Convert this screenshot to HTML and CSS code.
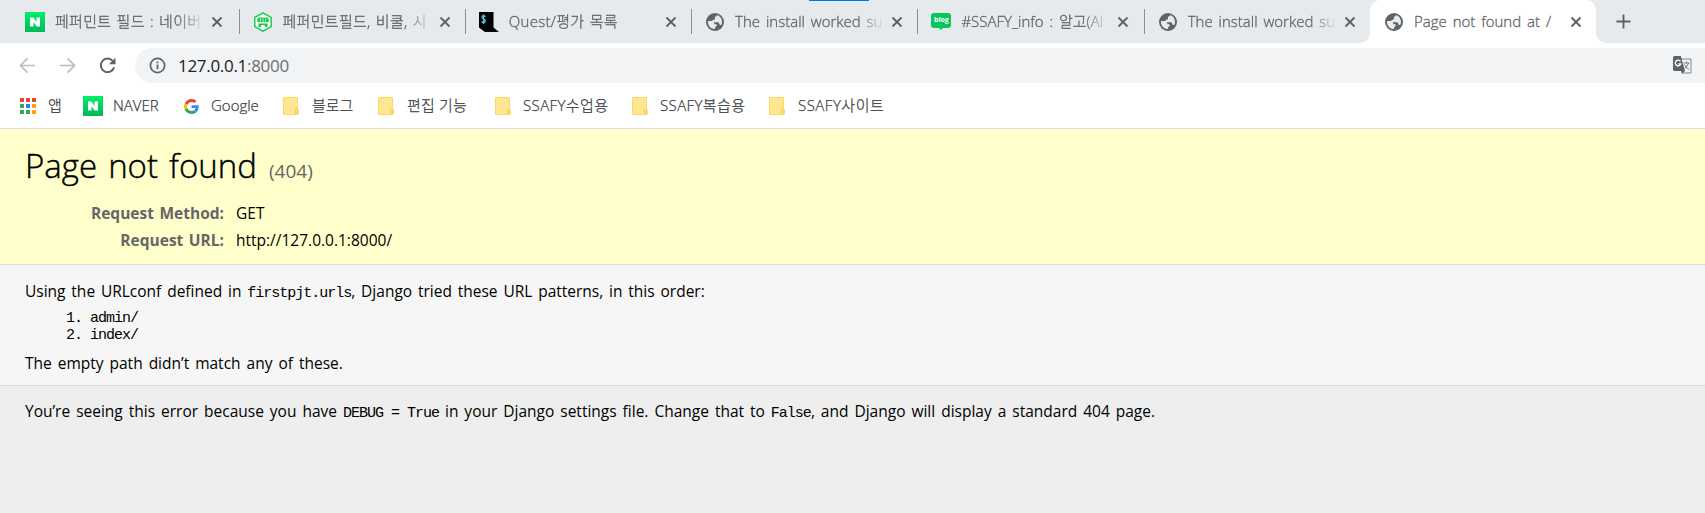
FILE: index.html
```html
<!DOCTYPE html>
<html lang="ko">
<head>
<meta charset="utf-8">
<title>Page not found at /</title>
<link rel="stylesheet" href="styles.css">
</head>
<body>
<svg class="defs" width="0" height="0">
  <symbol id="globe" viewBox="2 2 20 20"><circle cx="12" cy="12" r="10" fill="#5f6368"/><path d="M4.200 11h4.600c1.700 0 2.400.9 2.400 2.200v1.200h1.700c.9 0 1.100.5 1.100 1.100 0 1.200-1.700 1.500-1.900 2.500v1.900C7.800 20.200 3.700 16.400 4.200 11zM14.300 4.300c3.300 1 5.400 4 5.500 7.500 0 1.300-.3 2.400-.9 3.400-.8.3-1.700 0-2-.6-.2-1.600-1.100-2.200-2.300-2.200h-2.200c-1 0-1.300-.8-2.100-.8-.8-.1-1.200-.5-1.200-1s.5-1 1.200-1c1.200 0 1.600-.5 1.600-1.300V6.800c.2-.8 1-1.200 1.900-1.200z" fill="#e7eaed"/></symbol>
  <symbol id="close" viewBox="0 0 12 12"><path d="M1.500 1.500l9 9M10.500 1.500l-9 9" stroke="#5f6368" stroke-width="1.900" fill="none"/></symbol>
  <symbol id="naver" viewBox="0 0 20 20"><linearGradient id="ng" x2="0" y2="1"><stop stop-color="#00ef6b"/><stop offset="1" stop-color="#00b857"/></linearGradient><path d="M0 0h20v20H0z" fill="url(#ng)"/><path d="M5 5.500h3.500l3 4.200V5.500H15v9h-3.400l-3.100-4.300v4.300H5z" fill="#fff"/></symbol>
  <symbol id="folder" viewBox="0 0 16 18"><path d="M.5.500h14v12l1 1.500v2.500q0 1-1.500 1H.5z" fill="#ffe690" stroke="#fbd968"/><path d="M12.500 17v-4q0-1.200 1.200-1.200t1.300 1.200v3.200q0 1.300-2.500 1.300" fill="#ffe07a" stroke="#f6cf52"/></symbol>
</svg>

<header class="browser">
  <div class="tabs">
    <i class="progress"></i>
    <div class="tab first"><svg class="fav"><use href="#naver"/></svg><span class="label kr">페퍼민트 필드 : 네이버</span><svg class="close"><use href="#close"/></svg></div>
    <div class="tab"><svg class="fav" viewBox="0 0 20 20"><path d="M10 .8l8.200 4.700v9L10 19.200 1.800 14.500v-9z" fill="#f4fff7" stroke="#14c94b" stroke-width="1.400"/><path d="M5 5.500h10l1 4q-1.500 1.500-3 0-1.500 1.500-3 0-1.500 1.500-3 0-1.500 1.500-3 0zM5.500 11.500h9V15h-2.200q-.3-2-1.300-2h-2q-1 0-1.300 2H5.500z" fill="#14c94b"/><path d="M7.500 6v3.500M10 6v3.500M12.500 6v3.500" stroke="#f4fff7" stroke-width=".7"/></svg><span class="label kr">페퍼민트필드, 비쿨, 시</span><svg class="close"><use href="#close"/></svg></div>
    <div class="tab"><svg class="fav" viewBox="0 0 20 20"><path d="M0 0h14.500v15.500L20 20H6l-6-4.500z" fill="#000"/><path d="M6.300 5Q6 3.700 4.500 3.700T3 5.200q0 1 1.600 1.700T6.300 9q0 1.700-1.700 1.700T2.700 9.300M4.600 2.500v9.500" fill="none" stroke="#55c8e8" stroke-width="1.200"/></svg><span class="label kr">Quest/평가 목록</span><svg class="close"><use href="#close"/></svg></div>
    <div class="tab"><svg class="fav globe"><use href="#globe"/></svg><span class="label">The install worked suc</span><svg class="close"><use href="#close"/></svg></div>
    <div class="tab"><span class="fav blog">blog</span><span class="label">#SSAFY_info : 알고(Al</span><svg class="close"><use href="#close"/></svg></div>
    <div class="tab"><svg class="fav globe"><use href="#globe"/></svg><span class="label">The install worked suc</span><svg class="close"><use href="#close"/></svg></div>
    <div class="tab active"><svg class="fav globe"><use href="#globe"/></svg><span class="label">Page not found at /</span><svg class="close"><use href="#close"/></svg></div>
    <svg class="plus" viewBox="0 0 16 16"><path d="M8 .5v15M.5 8h15" stroke="#5f6368" stroke-width="2"/></svg>
  </div>

  <div class="toolbar">
    <svg class="nav" viewBox="0 0 18 18"><path d="M17 9H2M9 1.500L1.500 9 9 16.500" fill="none" stroke="#bbbdbf" stroke-width="1.800"/></svg>
    <svg class="nav" viewBox="0 0 18 18"><path d="M1 9h15M9 1.500L16.500 9 9 16.500" fill="none" stroke="#bbbdbf" stroke-width="1.800"/></svg>
    <svg class="nav" viewBox="0 0 18 18"><path d="M14.500 4A7.200 7.200 0 1 0 16 11" fill="none" stroke="#5f6368" stroke-width="2"/><path d="M17.500.8v7h-7z" fill="#5f6368"/></svg>
    <div class="omnibox">
      <svg class="info" viewBox="0 0 18 18"><circle cx="9" cy="9" r="7.500" fill="none" stroke="#5f6368" stroke-width="1.800"/><path d="M9 8v5M9 4.800v1.900" stroke="#5f6368" stroke-width="1.900"/></svg>
      <span class="url">127.0.0.1<span>:8000</span></span>
      <svg class="translate" viewBox="0 0 19 18"><path d="M8 3h10v14H10" fill="#f1f3f4" stroke="#85898d"/><path d="M1.500 0h6.300L12 15H1.500Q0 15 0 13.500v-12Q0 0 1.500 0zM8 15h4l-3 3z" fill="#5f6368"/><path d="M7.500 5.500a2.800 2.800 0 1 0 .3 2.300H5.300" fill="none" stroke="#fff" stroke-width="1.300"/><path d="M10.500 7h6M13.500 5.500V7M15.500 7q-1 3.500-4 5.500M11.700 8.500q1.500 3.500 4.300 5" fill="none" stroke="#777b80"/></svg>
    </div>
  </div>

  <nav class="bookmarks">
    <a class="bm apps"><svg class="grid" viewBox="0 0 16 16"><path d="M0 0h4v4H0zM6 0h4v4H6zM12 0h4v4h-4z" fill="#ea4335"/><path d="M0 6h4v4H0zM0 12h4v4H0zM6 12h4v4H6z" fill="#34a853"/><path d="M6 6h4v4H6z" fill="#1e88f0"/><path d="M12 6h4v4h-4zM12 12h4v4h-4z" fill="#fba60a"/></svg><span>앱</span></a>
    <a class="bm nv"><svg class="icon20"><use href="#naver"/></svg><span>NAVER</span></a>
    <a class="bm gg"><svg class="g" viewBox="0 0 48 48"><path fill="#EA4335" d="M24 9.500c3.540 0 6.710 1.220 9.210 3.600l6.850-6.850C35.900 2.380 30.470 0 24 0 14.620 0 6.510 5.380 2.560 13.220l7.980 6.190C12.430 13.720 17.740 9.500 24 9.500z"/><path fill="#4285F4" d="M46.980 24.550c0-1.570-.15-3.090-.38-4.550H24v9.020h12.940c-.58 2.960-2.260 5.480-4.780 7.180l7.730 6c4.510-4.180 7.090-10.360 7.090-17.650z"/><path fill="#FBBC05" d="M10.530 28.590c-.48-1.450-.76-2.990-.76-4.590s.27-3.140.76-4.590l-7.980-6.190C.92 16.460 0 20.120 0 24s.92 7.540 2.560 10.780l7.970-6.190z"/><path fill="#34A853" d="M24 48c6.480 0 11.930-2.130 15.890-5.810l-7.730-6c-2.150 1.450-4.920 2.300-8.160 2.300-6.260 0-11.570-4.220-13.470-9.910l-7.980 6.190C6.510 42.620 14.620 48 24 48z"/></svg><span>Google</span></a>
    <a class="bm f1"><svg class="folder"><use href="#folder"/></svg><span>블로그</span></a>
    <a class="bm f2"><svg class="folder"><use href="#folder"/></svg><span>편집 기능</span></a>
    <a class="bm f3"><svg class="folder"><use href="#folder"/></svg><span>SSAFY수업용</span></a>
    <a class="bm f4"><svg class="folder"><use href="#folder"/></svg><span>SSAFY복습용</span></a>
    <a class="bm f5"><svg class="folder"><use href="#folder"/></svg><span>SSAFY사이트</span></a>
  </nav>
</header>

<main>
  <section class="summary">
    <h1><span class="title">Page not found</span><span class="code">(404)</span></h1>
    <dl>
      <dt>Request Method:</dt><dd>GET</dd>
      <dt>Request URL:</dt><dd class="address">http://127.0.0.1:8000/</dd>
    </dl>
  </section>
  <section class="info-block">
    <p class="using">Using the URLconf defined in <code>firstpjt.urls</code>, Django tried these URL patterns, in this order:</p>
    <ol><li>1. admin/</li><li>2. index/</li></ol>
    <p class="empty">The empty path didn’t match any of these.</p>
  </section>
  <section class="explanation">
    <p>You’re seeing this error because you have <code>DEBUG = True</code> in your Django settings file. Change that to <code>False</code>, and Django will display a standard 404 page.</p>
  </section>
</main>
</body>
</html>
```
FILE: styles.css
```css
* { box-sizing: border-box; margin: 0; padding: 0; }
body {
  width: 1705px; height: 513px; overflow: hidden; background: #eee; color: #000;
  font-family: "Open Sans", "Noto Sans CJK KR", sans-serif; font-size: 15.5px;
}
.defs { position: absolute; }
svg { display: block; flex: none; }

.browser { height: 129px; background: #fff; border-bottom: 1px solid #dadce0; }
.tabs { position: relative; display: flex; height: 43px; padding-left: 12px; background: #e7eaed; }
.progress { position: absolute; left: 809px; top: 0; width: 60px; height: 1px; background: #0078d7; }
.tab { position: relative; display: flex; align-items: center; width: 226.300px; height: 43px; padding-left: 14px; flex: none; }
.tab.first { width: 226.500px; padding-left: 13px; }
.tab:not(.active)::after {
  content: ""; position: absolute; right: -1px; top: 9px; width: 1px; height: 25px; background: #8b8f94;
}
.tab:nth-last-child(3)::after { display: none; }
.fav { width: 20px; height: 20px; flex: none; }
.fav.globe { width: 18px; height: 18px; margin: 0 1px; }
.label {
  width: 147px; margin-left: 10px; padding-bottom: 1px; overflow: hidden; white-space: nowrap; flex: none; line-height: 24px;
  color: #5f6368; font-size: 15px; font-weight: 300; word-spacing: 2px; -webkit-text-stroke: .3px #5f6368;
  -webkit-mask-image: linear-gradient(to right, #000 122px, transparent 150px);
}
.label.kr { letter-spacing: .3px; word-spacing: 1px; }
.active .label { -webkit-mask-image: none; }
.close { width: 12px; height: 12px; margin-left: 9px; }
.active { background: #fff; border-radius: 10px 10px 0 0; }
.active::before, .active::after {
  content: ""; position: absolute; bottom: 0; width: 10px; height: 10px;
}
.active::before { left: -10px; background: radial-gradient(circle at 0 0, transparent 9.500px, #fff 10px); }
.active::after { right: -10px; background: radial-gradient(circle at 100% 0, transparent 9.500px, #fff 10px); }
.blog {
  position: relative; height: 15px; margin-bottom: 3px; background: #03c75a; border-radius: 3px;
  color: #fff; font: bold 7px/14px "Open Sans", sans-serif; text-align: center;
}
.blog::after {
  content: ""; position: absolute; left: 8px; top: 15px; border: 2.500px solid transparent; border-top-color: #03c75a;
}
.plus { width: 15px; height: 15px; margin: 14px 0 0 20px; }

.toolbar { display: flex; align-items: center; height: 45px; padding-left: 19px; padding-bottom: 1px; }
.nav { width: 17px; height: 17px; margin-right: 23px; }
.omnibox {
  display: flex; align-items: center; width: 1570px; height: 35px; margin-left: -4px; padding: 0 13px 0 14px;
  background: #f1f3f4; border-radius: 18px 0 0 18px; flex: none;
}
.info { width: 17px; height: 17px; }
.url { margin-left: 12px; font-size: 17px; color: #202124; letter-spacing: -.3px; }
.url span { color: #6b6f73; }
.translate { width: 19px; height: 18px; margin-left: auto; }

.bookmarks {
  display: flex; height: 40px; padding-left: 20px; margin-top: -2px;
  color: #3c4043; font-size: 15px; font-weight: 300; -webkit-text-stroke: .25px #3c4043;
}
.bm { display: flex; align-items: center; white-space: nowrap; flex: none; }
.bm span { line-height: 24px; padding-bottom: 2px; }
.apps { width: 63px; gap: 12px; }
.nv { width: 101px; gap: 10px; }
.gg { width: 99px; gap: 12px; }
.f1 { width: 95px; gap: 13px; }
.f2 { width: 117px; gap: 13px; letter-spacing: .2px; }
.f3, .f4 { width: 137px; gap: 12px; letter-spacing: .4px; }
.f5 { gap: 13px; letter-spacing: .5px; }
.grid { width: 16px; height: 16px; }
.icon20 { width: 20px; height: 20px; }
.g { width: 15px; height: 15px; }
.folder { width: 16px; height: 18px; }

.summary { height: 136px; padding: 13px 25px 0; background: #ffc; border-bottom: 1px solid #ddd; }
h1 { display: flex; align-items: baseline; height: 58px; line-height: 48px; font-weight: 400; }
.title { font-size: 33px; font-weight: 300; word-spacing: 2.500px; -webkit-text-stroke: .4px #000; }
.code { margin-left: 12px; font-size: 19px; color: #666; }
dl { display: grid; grid-template-columns: 199px 1fr; column-gap: 12px; line-height: 27px; }
dt { text-align: right; font-weight: 700; color: #666; word-spacing: 1.500px; }
.info-block { height: 121px; padding: 13px 25px 0; background: #f6f6f6; border-bottom: 1px solid #ddd; }
p { line-height: 26px; word-spacing: 1.950px; white-space: nowrap; }
.using { word-spacing: 1.800px; }
code, ol { font-family: "Liberation Mono", monospace; font-size: 15px; letter-spacing: -1px; }
code { word-spacing: 0; }
ol { list-style: none; padding: 3px 0 0 41px; line-height: 17px; }
.empty { padding-top: 6px; }
.explanation { height: 127px; padding: 12px 25px 0; background: #eee; }
```
